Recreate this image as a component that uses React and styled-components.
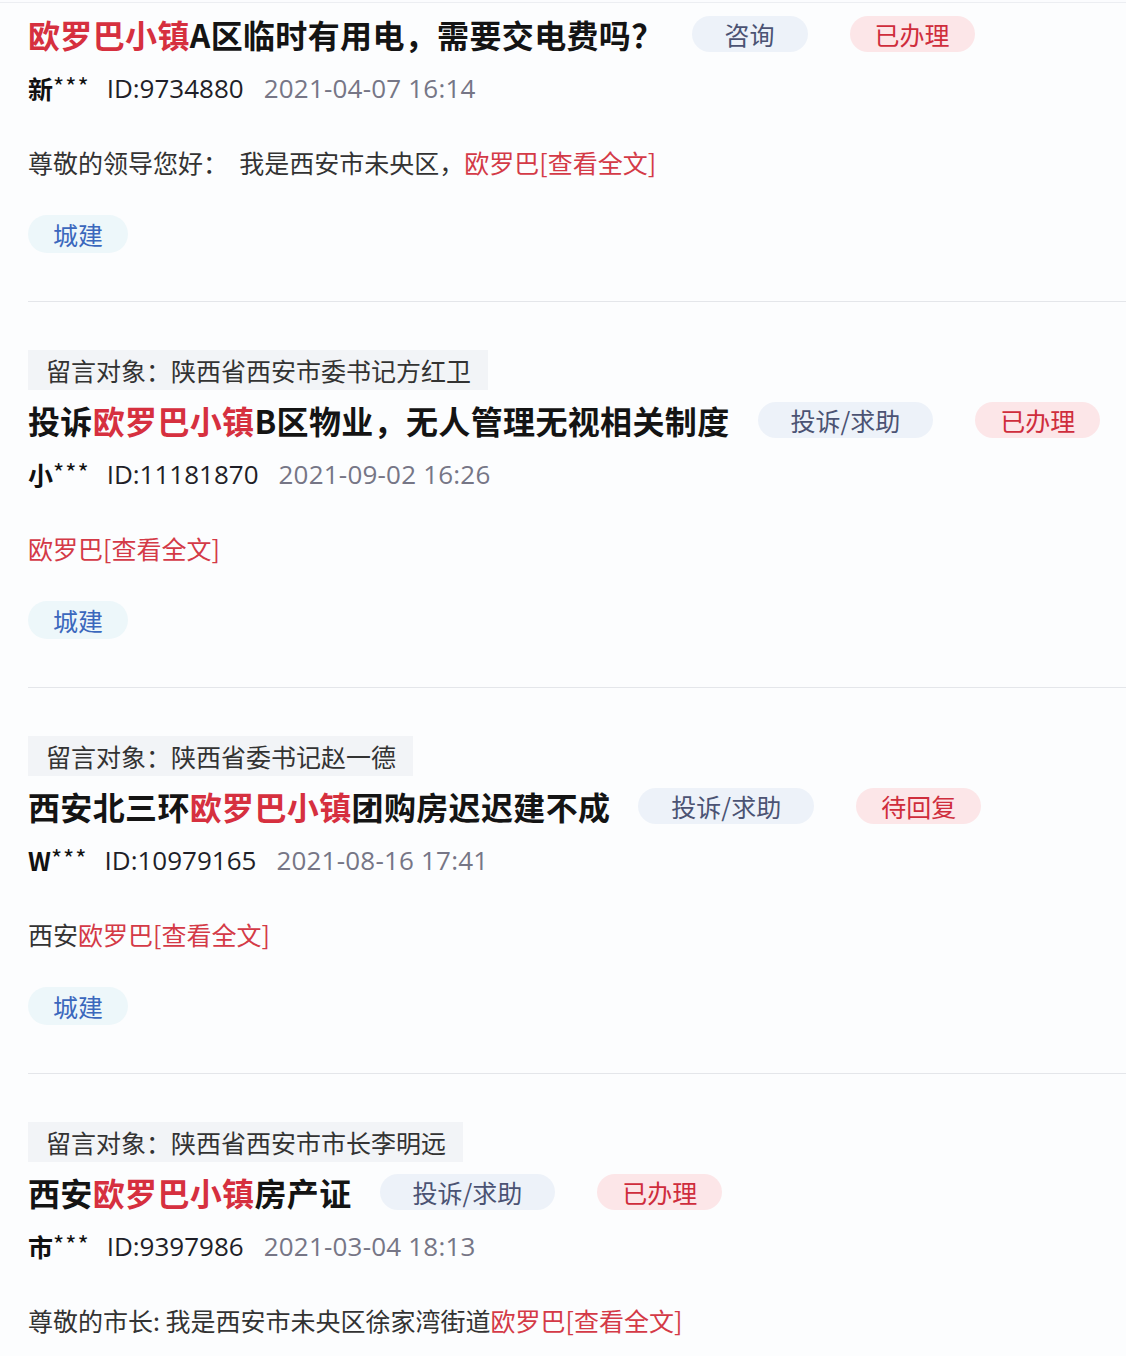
import styled, { createGlobalStyle } from "styled-components";

// Global reset + fonts

const GlobalStyle = createGlobalStyle`
html, body {
  margin : 0;
  padding : 0;
  background : #fbfcfe;
}
body {
  font-family : "Noto Sans CJK SC", "Noto Sans", sans-serif;
  color : #222;
}
`

const Page = styled.div`
width : 1126px;
min-height : 1356px;
box-sizing : border-box;
border-top : 1px solid #eceef2;
margin-top : 2px;
background : #fcfdfe;
`

const Card = styled.div`
margin-left : 28px;
padding-top : 7px;
padding-bottom : 48px;
border-bottom : 1px solid #e4e6ea;
&:last-child {
  border-bottom : none;
}
`

const Target = styled.div`
display : inline-flex;
align-items : center;
height : 40px;
margin-top : 41px;
padding : 0 17px 0 18px;
background : #f2f4f7;
color : #333;
font-size : 25px;
`

const TitleRow = styled.div`
display : flex;
align-items : center;
height : 48px;
margin-top : ${p => p.$first ? "0" : "6px"};
`

const Title = styled.h2`
margin : 0;
font-size : 32px;
font-weight : 700;
color : #141414;
letter-spacing : 0.35px;
white-space : nowrap;
`

const Hl = styled.span`
color : #d6303f;
font-weight : inherit;
`

const Pill = styled.span`
display : inline-flex;
align-items : center;
justify-content : center;
height : 36px;
border-radius : 18px;
font-size : 25px;
white-space : nowrap;
`

const TypePill = styled(Pill)`
margin-left : 28px;
padding : 0 33px;
background : #edf2f9;
color : #4b5373;
`

const StatusPill = styled(Pill)`
margin-left : 42px;
padding : 0 25px;
background : #fce6e8;
color : #cf2d3c;
`

const Meta = styled.div`
display : flex;
align-items : center;
height : 40px;
margin-top : 10px;
font-size : 26px;
font-family : "Open Sans", "Noto Sans CJK SC", sans-serif;
`

const Name = styled.span`
font-weight : 700;
color : #111;
font-family : "Noto Sans CJK SC", sans-serif;
font-size : 25px;
`

const Stars = styled.span`
font-weight : 400;
font-size : 24px;
letter-spacing : 1px;
position : relative;
top : -3px;
`

const Uid = styled.span`
margin-left : 17px;
color : #1f1f28;
`

const Date = styled.span`
margin-left : 20px;
color : #767686;
letter-spacing : 0.2px;
`

const Body = styled.div`
display : flex;
align-items : center;
height : 40px;
margin-top : 34px;
font-size : 25px;
color : #333;
white-space : pre;
`

const More = styled.span`
color : #d43a47;
`

const Tag = styled.span`
display : inline-flex;
align-items : center;
height : 38px;
margin-top : 33px;
padding : 0 25px;
border-radius : 19px;
background : #edf7fa;
color : #3b68bd;
font-size : 25px;
`

const items = [
  {
    title : [["欧罗巴小镇", "hl"], ["A区临时有用电，需要交电费吗？", ""]],
    type : "咨询",
    status : "已办理",
    name : "新",
    id : "9734880",
    date : "2021-04-07 16:14",
    body : "尊敬的领导您好：  我是西安市未央区，",
    tag : "城建",
  },
  {
    target : "陕西省西安市委书记方红卫",
    title : [["投诉", ""], ["欧罗巴小镇", "hl"], ["B区物业，无人管理无视相关制度", ""]],
    type : "投诉/求助",
    status : "已办理",
    name : "小",
    id : "11181870",
    date : "2021-09-02 16:26",
    body : "",
    tag : "城建",
  },
  {
    target : "陕西省委书记赵一德",
    title : [["西安北三环", ""], ["欧罗巴小镇", "hl"], ["团购房迟迟建不成", ""]],
    type : "投诉/求助",
    status : "待回复",
    name : "W",
    id : "10979165",
    date : "2021-08-16 17:41",
    body : "西安",
    tag : "城建",
  },
  {
    target : "陕西省西安市市长李明远",
    title : [["西安", ""], ["欧罗巴小镇", "hl"], ["房产证", ""]],
    type : "投诉/求助",
    status : "已办理",
    name : "市",
    id : "9397986",
    date : "2021-03-04 18:13",
    body : "尊敬的市长: 我是西安市未央区徐家湾街道",
  },
]

function App () {
  return(
    <>
      <GlobalStyle />
      <Page>
        {items.map((it, i) => (
          <Card key={i}>
            {it.target && <Target>留言对象：{it.target}</Target>}
            <TitleRow $first={!it.target}>
              <Title>
                {it.title.map(([t, k], j) => k === "hl" ? <Hl key={j}>{t}</Hl> : <span key={j}>{t}</span>)}
              </Title>
              <TypePill>{it.type}</TypePill>
              <StatusPill>{it.status}</StatusPill>
            </TitleRow>
            <Meta>
              <Name>{it.name}<Stars>***</Stars></Name>
              <Uid>ID:{it.id}</Uid>
              <Date>{it.date}</Date>
            </Meta>
            <Body>{it.body}<More>欧罗巴[查看全文]</More></Body>
            {it.tag && <Tag>{it.tag}</Tag>}
          </Card>
        ))}
      </Page>
    </>
  )
}

export default App;
